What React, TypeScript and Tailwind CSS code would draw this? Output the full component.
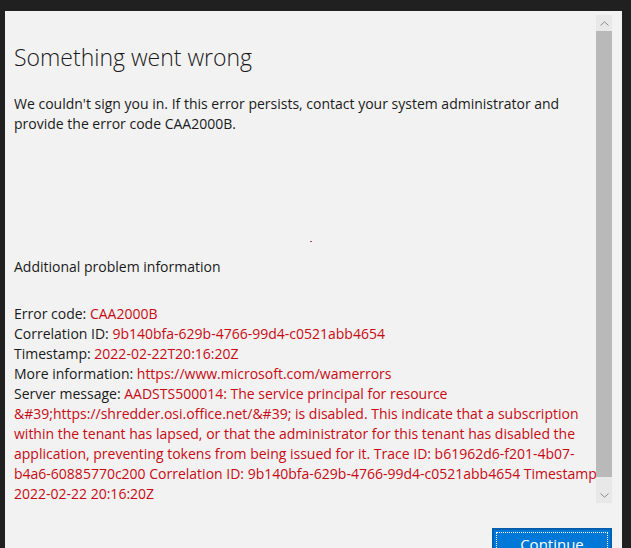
import React from "react";

const F = { fontFamily: '"Open Sans", "Noto Sans", sans-serif' };

function Row({ label, value }: { label: string; value: string }) {
  return (
    <div className="h-[20px] leading-[20px] whitespace-nowrap">
      <span className="text-[#1a1a1a]">{label}</span>
      <span className="text-[#c80a14]">{value}</span>
    </div>
  );
}

function Red({ children }: { children: React.ReactNode }) {
  return <div className="h-[20px] leading-[20px] whitespace-nowrap text-[#c80a14]">{children}</div>;
}

export default function App() {
  return (
    <div className="w-[631px] h-[548px] bg-[#202020] overflow-hidden pt-[11px] pl-[5px]" style={F}>
      <div className="w-[617px] h-[537px] bg-[#f2f2f2] flex flex-col">
        <div className="flex h-[492px]">
          <div className="flex-1 overflow-hidden pl-[9px] pt-[30px] text-[14px] text-[#1a1a1a]">
            <div className="h-[32px] leading-[32px] text-[23px] font-light whitespace-nowrap text-[#1a1a1a]">Something went wrong</div>
            <div className="mt-[21px]">
              <div className="h-[20px] leading-[20px] whitespace-nowrap">We couldn't sign you in. If this error persists, contact your system administrator and</div>
              <div className="h-[20px] leading-[20px] whitespace-nowrap">provide the error code CAA2000B.</div>
            </div>
            <div className="h-[123px] flex flex-col">
              <div className="mt-[107px] ml-[296px] w-[2px] h-[1px] bg-[#a05050]" />
            </div>
            <div className="h-[20px] leading-[20px] whitespace-nowrap">Additional problem information</div>
            <div className="mt-[27px]">
              <Row label="Error code: " value="CAA2000B" />
              <Row label="Correlation ID: " value="9b140bfa-629b-4766-99d4-c0521abb4654" />
              <Row label="Timestamp: " value="2022-02-22T20:16:20Z" />
              <Row label="More information: " value="https://www.microsoft.com/wamerrors" />
              <Row label="Server message: " value="AADSTS500014: The service principal for resource" />
              <Red>&amp;#39;https://shredder.osi.office.net/&amp;#39; is disabled. This indicate that a subscription</Red>
              <Red>within the tenant has lapsed, or that the administrator for this tenant has disabled the</Red>
              <Red>application, preventing tokens from being issued for it. Trace ID: b61962d6-f201-4b07-</Red>
              <Red>b4a6-60885770c200 Correlation ID: 9b140bfa-629b-4766-99d4-c0521abb4654 Timestamp:</Red>
              <Red>2022-02-22 20:16:20Z</Red>
            </div>
          </div>
          <div className="w-[16px] mt-[4px] mr-[10px] h-[488px] bg-[#e8e8e8] flex flex-col">
            <div className="h-[16px] flex items-center justify-center">
              <svg width="9" height="5" viewBox="0 0 9 5"><path d="M0.5 4.5 L4.5 0.8 L8.5 4.5" fill="none" stroke="#8a8a8a" strokeWidth="1" /></svg>
            </div>
            <div className="h-[446px] bg-[#b9b9b9]" />
            <div className="flex-1" />
            <div className="h-[16px] flex items-center justify-center">
              <svg width="9" height="5" viewBox="0 0 9 5"><path d="M0.5 0.5 L4.5 4.2 L8.5 0.5" fill="none" stroke="#8a8a8a" strokeWidth="1" /></svg>
            </div>
          </div>
        </div>
        <div className="flex justify-end pr-[10px] mt-[25px]">
          <div className="w-[120px] h-[32px] bg-[#0078d7] border-2 border-[#005fb0] p-[2px] shrink-0">
            <div className="w-full h-full border border-dotted border-white flex items-center justify-center text-white text-[15px]">
              Continue
            </div>
          </div>
        </div>
      </div>
    </div>
  );
}
